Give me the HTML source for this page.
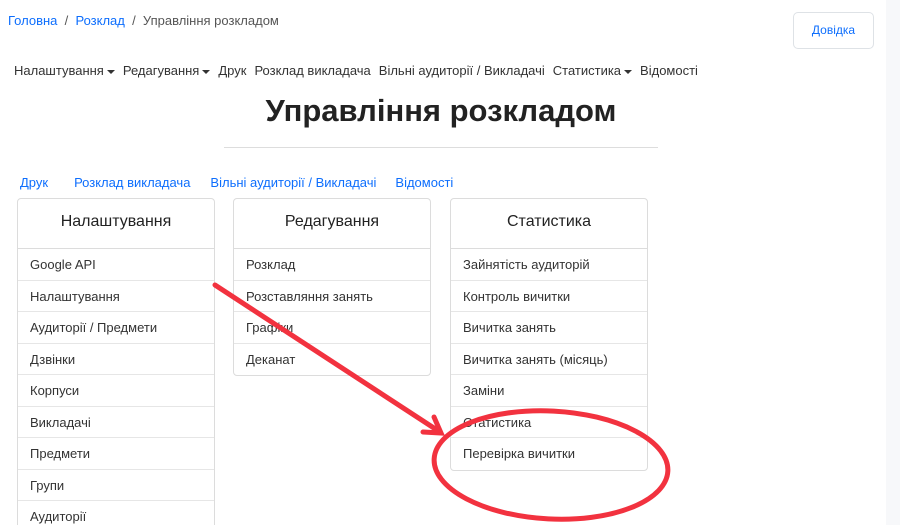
<!DOCTYPE html>
<html><head><meta charset="utf-8"><style>
*{margin:0;padding:0;box-sizing:border-box}
html,body{width:900px;height:525px;overflow:hidden}
body{background:#fff;font-family:"Liberation Sans",Arial,sans-serif;color:#212529;position:relative}
.a{position:absolute;white-space:nowrap}
.blue{color:#0d6efd}
.bc{top:13px;left:8px;font-size:13px;color:#555}
.nav{top:63px;left:14px;font-size:13px;color:#333}
.nav span{margin-right:8px}
.caret{display:inline-block;border-left:4px solid transparent;border-right:4px solid transparent;border-top:4px solid #333;vertical-align:middle;margin-left:3px}
h1{position:absolute;left:0;width:882px;text-align:center;top:93px;font-size:31px;font-weight:bold;color:#222}
.hr{position:absolute;left:224px;width:434px;top:147px;height:1px;background:#ddd}
.links{top:175px;left:20px;font-size:13px;color:#0d6efd}
.card{position:absolute;top:198px;width:198px;border:1px solid #dcdcdc;border-radius:4px;background:#fff;overflow:hidden}
.card .h{height:50px;line-height:46px;text-align:center;font-size:16px;border-bottom:1px solid #dcdcdc;color:#222}
.card .r{height:31.5px;line-height:31px;padding-left:12px;font-size:13px;border-bottom:1px solid #e6e6e6;color:#333}
.card .r:last-child{border-bottom:none}
.btn{top:12px;left:793px;width:81px;height:37px;border:1px solid #dee2e6;border-radius:5px;text-align:center;line-height:35px;font-size:12px;color:#0d6efd}
.strip{position:absolute;left:886px;top:0;width:14px;height:525px;background:#f7f8fa}
</style></head><body>
<div class="a bc"><span class="blue">Головна</span> &nbsp;/&nbsp; <span class="blue">Розклад</span> &nbsp;/&nbsp; Управління розкладом</div>
<div class="a btn">Довідка</div>
<div class="a nav"><span>Налаштування<i class="caret"></i></span><span>Редагування<i class="caret"></i></span><span>Друк</span><span>Розклад викладача</span><span>Вільні аудиторії / Викладачі</span><span>Статистика<i class="caret"></i></span><span>Відомості</span></div>
<h1>Управління розкладом</h1>
<div class="hr"></div>
<div class="a links"><span style="margin-right:26px">Друк</span><span style="margin-right:20px">Розклад викладача</span><span style="margin-right:19px">Вільні аудиторії / Викладачі</span><span>Відомості</span></div>
<div class="card" style="left:17px;height:340px"><div class="h">Налаштування</div><div class="r">Google API</div><div class="r">Налаштування</div><div class="r">Аудиторії / Предмети</div><div class="r">Дзвінки</div><div class="r">Корпуси</div><div class="r">Викладачі</div><div class="r">Предмети</div><div class="r">Групи</div><div class="r">Аудиторії</div></div>
<div class="card" style="left:233px"><div class="h">Редагування</div><div class="r">Розклад</div><div class="r">Розставляння занять</div><div class="r">Графіки</div><div class="r">Деканат</div></div>
<div class="card" style="left:450px"><div class="h">Статистика</div><div class="r">Зайнятість аудиторій</div><div class="r">Контроль вичитки</div><div class="r">Вичитка занять</div><div class="r">Вичитка занять (місяць)</div><div class="r">Заміни</div><div class="r">Статистика</div><div class="r">Перевірка вичитки</div></div>
<div class="strip"></div>
<svg class="a" style="left:0;top:0" width="900" height="525" viewBox="0 0 900 525">
<g fill="none" stroke="#f2323f" stroke-width="5" stroke-linecap="round">
<path d="M215 285 L440 432"/>
<path d="M423 432 L441 433 L434 417"/>
<ellipse cx="551" cy="465" rx="117" ry="54" transform="rotate(3 551 465)"/>
</g></svg>
</body></html>
